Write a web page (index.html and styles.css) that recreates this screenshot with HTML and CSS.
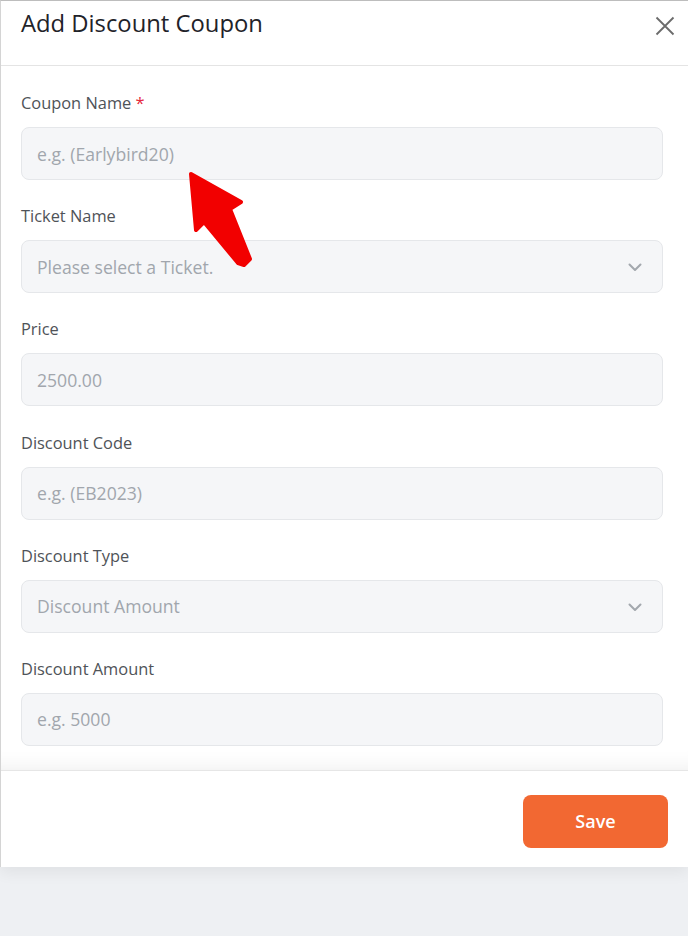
FILE: index.html
```html
<!DOCTYPE html>
<html>
<head>
<meta charset="utf-8">
<link rel="stylesheet" href="styles.css">
</head>
<body>
<div class="modal">
  <div class="header">
    <h1 class="title">Add Discount Coupon</h1>
    <button class="close" aria-label="Close">
      <svg width="20" height="20" viewBox="0 0 20 20"><path d="M1.5 1.5 L18.5 18.5 M18.5 1.5 L1.5 18.5" stroke="#6b6b6b" stroke-width="1.8" fill="none"/></svg>
    </button>
  </div>
  <div class="body">
    <div class="field">
      <label class="label">Coupon Name <span class="req">*</span></label>
      <div class="input"><span class="ph">e.g. (Earlybird20)</span></div>
    </div>
    <div class="field">
      <label class="label">Ticket Name</label>
      <div class="input select"><span class="ph">Please select a Ticket.</span>
        <svg class="chev" width="14" height="9" viewBox="0 0 14 9"><path d="M1.5 1.5 L7 7 L12.5 1.5" stroke="#a3a8ae" stroke-width="2" fill="none" stroke-linecap="round" stroke-linejoin="round"/></svg>
      </div>
    </div>
    <div class="field">
      <label class="label">Price</label>
      <div class="input"><span class="ph">2500.00</span></div>
    </div>
    <div class="field">
      <label class="label">Discount Code</label>
      <div class="input"><span class="ph">e.g. (EB2023)</span></div>
    </div>
    <div class="field">
      <label class="label">Discount Type</label>
      <div class="input select"><span class="ph">Discount Amount</span>
        <svg class="chev" width="14" height="9" viewBox="0 0 14 9"><path d="M1.5 1.5 L7 7 L12.5 1.5" stroke="#a3a8ae" stroke-width="2" fill="none" stroke-linecap="round" stroke-linejoin="round"/></svg>
      </div>
    </div>
    <div class="field">
      <label class="label">Discount Amount</label>
      <div class="input"><span class="ph">e.g. 5000</span></div>
    </div>
  </div>
  <div class="footer">
    <button class="save">Save</button>
  </div>
  <svg class="arrow" width="688" height="300" viewBox="0 0 688 300">
    <polygon points="191,174 241,202 230,209 250,259 244,265 238,263 204,222 196,230" fill="#f20000" stroke="#f20000" stroke-width="4" stroke-linejoin="round"/>
  </svg>
</div>
</body>
</html>
```
FILE: styles.css
```css
* { box-sizing: border-box; }
html, body { margin: 0; padding: 0; }
body {
  background: #eef0f3;
  font-family: "Open Sans", Lato, sans-serif;
  width: 688px;
  height: 936px;
  overflow: hidden;
}
.modal {
  position: relative;
  background: #fff;
  border-top: 1px solid #bdbdbd;
  border-left: 1px solid #d4d4d4;
  width: 688px;
  box-shadow: 0 6px 14px rgba(0,0,0,0.06);
}
.header {
  height: 65px;
  border-bottom: 1px solid #e4e4e4;
  display: flex;
  align-items: flex-start;
  justify-content: space-between;
  padding: 6px 0 0 20px;
}
.title {
  margin: 0;
  font-size: 23.8px;
  font-weight: 400;
  line-height: 32px;
  color: #1f2329;
}
.close {
  border: 0;
  background: none;
  padding: 0;
  margin: 9px 13px 0 0;
  width: 20px;
  height: 20px;
  display: flex;
}
.body {
  padding: 25px 25px 24px 20px;
  display: flex;
  flex-direction: column;
  gap: 24.2px;
  box-shadow: inset 0 -22px 20px -20px rgba(0,0,0,0.07);
}
.field {
  display: flex;
  flex-direction: column;
  gap: 12px;
}
.label {
  font-size: 16.4px;
  line-height: 24px;
  color: #4f5358;
}
.req { color: #e5283a; }
.input {
  height: 53px;
  background: #f5f6f8;
  border: 1px solid #e5e7ea;
  border-radius: 8px;
  display: flex;
  align-items: center;
  justify-content: space-between;
  padding: 0 20px 0 15px;
}
.ph {
  font-size: 17.6px;
  color: #a1a6ad;
}
.chev { display: block; margin-top: 2px; }
.footer {
  height: 97px;
  border-top: 1px solid #e6e6e6;
  display: flex;
  align-items: flex-start;
  justify-content: flex-end;
  padding: 24px 20px 0 0;
}
.save {
  width: 145px;
  height: 53px;
  background: #f26832;
  color: #fff;
  border: 0;
  border-radius: 8px;
  font-family: "Open Sans", sans-serif;
  font-size: 18px;
  font-weight: 600;
}
.arrow {
  position: absolute;
  left: -1px;
  top: -1px;
  pointer-events: none;
}
```
